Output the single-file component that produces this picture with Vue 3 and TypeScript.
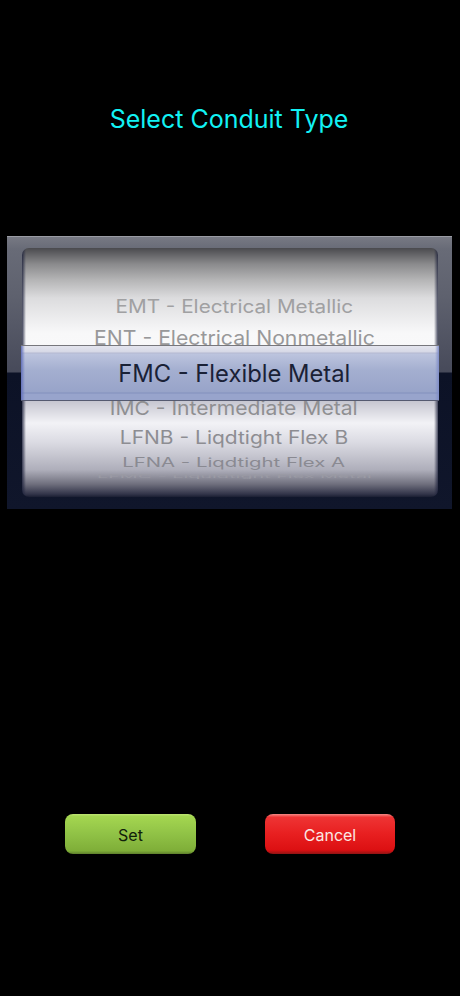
<script setup lang="ts">
interface Row {
  label: string
  height: number
  size: number
  sx: number
  sy: number
  color: string
  selected?: boolean
}

const rows: Row[] = [
  { label: 'EMT - Electrical Metallic', height: 31, size: 18, sx: 1.15, sy: 1, color: '#a0a0a2' },
  { label: 'ENT - Electrical Nonmetallic', height: 32, size: 20, sx: 1.06, sy: 1, color: '#98989a' },
  { label: 'FMC - Flexible Metal', height: 40, size: 24, sx: 0.99, sy: 1, color: '#1a2136', selected: true },
  { label: 'IMC - Intermediate Metal', height: 29, size: 19, sx: 1.11, sy: 1, color: '#8f8f92' },
  { label: 'LFNB - Liqdtight Flex B', height: 29, size: 18, sx: 1.165, sy: 1, color: '#8d8d92' },
  { label: 'LFNA - Liqdtight Flex A', height: 20, size: 16, sx: 1.27, sy: 0.8, color: '#8a8a92' },
  { label: 'LFMC - Liquidtight Flex Metal', height: 8, size: 14, sx: 1.41, sy: 0.35, color: '#9a9aa4' },
]

function labelStyle(r: Row) {
  return {
    fontSize: r.size + 'px',
    color: r.color,
    transform: `scale(${r.sx}, ${r.sy})`,
  }
}
</script>

<template>
  <div class="screen">
    <h1 class="title">Select Conduit Type</h1>

    <div class="frame">
      <div class="wheel">
        <div class="rows">
          <div
            v-for="r in rows"
            :key="r.label"
            class="row"
            :class="{ selected: r.selected }"
            :style="{ height: r.height + 'px' }"
          >
            <span class="label" :style="labelStyle(r)">{{ r.label }}</span>
          </div>
        </div>
        <div class="band"></div>
      </div>
    </div>

    <div class="actions">
      <button class="btn set">Set</button>
      <button class="btn cancel">Cancel</button>
    </div>
  </div>
</template>

<style>
html,
body {
  margin: 0;
  background: #000;
}
</style>

<style scoped>
.screen {
  width: 460px;
  height: 996px;
  background: #000;
  font-family: Inter, "Liberation Sans", sans-serif;
  display: flex;
  flex-direction: column;
  overflow: hidden;
}

.title {
  margin: 0;
  padding: 104px 2px 0 0;
  height: 30px;
  line-height: 30px;
  text-align: center;
  font-size: 25px;
  font-weight: 400;
  color: #12f2f4;
}

.frame {
  margin: 102px 8px 0 7px;
  height: 273px;
  box-sizing: border-box;
  padding: 11px 14px 12px 15px;
  border-top: 1px solid #9a9ca4;
  background: linear-gradient(180deg, #777983 0, #686b77 12px, #5e616e 60px, #474a5a 135px, #0c1226 136px, #10162b 100%);
}

.wheel {
  position: relative;
  height: 249px;
  border-radius: 7px;
  background:
    linear-gradient(90deg, rgba(30, 34, 60, 0.85), rgba(255, 255, 255, 0) 4px, rgba(255, 255, 255, 0) 412px, rgba(30, 34, 60, 0.8)),
    linear-gradient(180deg, #4a4a4e 0, #8a8a8c 16px, #b5b5b6 32px, #dcdcde 50px, #f8f8f9 85px, #fbfbfc 150px, #c6c6d0 153px, #f2f2f6 175px, #dadae2 195px, #aeaeba 222px, #70707e 236px, #33354a 246px, #1b1f33 249px);
}

.rows {
  padding: 43px 0 0 8px;
  display: flex;
  flex-direction: column;
}

.row {
  display: flex;
  align-items: center;
  justify-content: center;
  white-space: nowrap;
}

.row.selected {
  position: relative;
  z-index: 2;
}

.label {
  display: block;
  line-height: 1;
}

.band {
  position: absolute;
  z-index: 1;
  left: -1px;
  right: -1px;
  top: 97px;
  height: 56px;
  box-sizing: border-box;
  border-top: 1px solid #77777c;
  border-bottom: 1px solid #555a70;
  background:
    linear-gradient(90deg, #6472bc 0, transparent 4px, transparent 414px, #7f8dc8 100%),
    linear-gradient(180deg, #e4e5ee 0, #d6d8e6 6px, #b4b8d0 7px, #bcc4de 8px, #a4afd0 24px, #98a4c9 46px, #8290bd 47px, #98a4cc 48px, #98a4cc 100%);
}

.actions {
  margin-top: 305px;
  padding: 0 65px;
  display: flex;
  justify-content: space-between;
}

.btn {
  width: 131px;
  height: 40px;
  padding: 1px 0 0;
  border: 0;
  border-radius: 8px;
  font-family: inherit;
  font-size: 16px;
}

.set {
  color: #10200a;
  background: linear-gradient(180deg, #bfe474 0, #a4d650 6%, #90c246 50%, #7fae38 92%, #5e7f2c 100%);
}

.cancel {
  width: 130px;
  color: #fbe8e4;
  background: linear-gradient(180deg, #f58a86 0, #ee3434 8%, #e81f20 50%, #dc1012 90%, #8f1414 100%);
}
</style>
